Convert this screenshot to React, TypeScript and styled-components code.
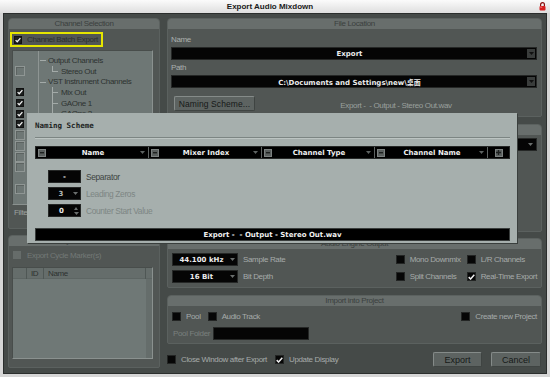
import styled, { createGlobalStyle, css } from "styled-components";

const ui = `"Liberation Sans", Arial, sans-serif`;
const boldFont = `"DejaVu Sans", "Noto Sans CJK SC", sans-serif`;

const GlobalStyle = createGlobalStyle`
  html, body { margin: 0; padding: 0; background: #d6d6d6; }
  body { font-family: ${ui}; font-size: 8px; letter-spacing: -0.35px; white-space: nowrap; }
  * { box-sizing: border-box; }
`;

const Window = styled.div`
  position: relative;
  width: 550px;
  height: 377px;
  display: flex;
  flex-direction: column;
  background: #d6d6d6;
  padding: 0 3px 3px 3px;
  overflow: hidden;
`;

const TitleBar = styled.div`
  height: 13px;
  margin: 0 -3px;
  display: grid;
  grid-template-columns: 1fr auto 1fr;
  align-items: center;
  background: linear-gradient(#fbfbfb, #dedede);
  font: bold 8px "Liberation Sans", Arial, sans-serif;
  letter-spacing: 0;
  color: #1a1a1a;
`;

const TitleText = styled.span`
  padding-right: 10px;
`;

const CloseIcon = styled.svg`
  justify-self: end;
  margin-right: 4px;
`;

const Body = styled.div`
  flex: 1;
  display: grid;
  grid-template-columns: 152px 1fr;
  column-gap: 7px;
  padding: 4px 4px 3px 4px;
  background: #454a48;
  border: 1px solid #2b2e2d;
`;

const Column = styled.div`
  display: flex;
  flex-direction: column;
  min-width: 0;
`;

const Panel = styled.section<{ $h?: number; $mt?: number; $mb?: number }>`
  display: flex;
  flex-direction: column;
  background: #515654;
  border: 1px solid #5b615f;
  border-radius: 4px 4px 2px 2px;
  overflow: hidden;
  margin-top: ${(p) => p.$mt ?? 0}px;
  margin-bottom: ${(p) => p.$mb ?? 0}px;
  ${(p) =>
    p.$h
      ? css`
          height: ${p.$h}px;
          flex: none;
        `
      : css`
          flex: 1;
        `}
`;

const PanelHead = styled.div`
  height: 10px;
  line-height: 10px;
  flex: none;
  text-align: center;
  background: #686e6c;
  color: #3b403e;
`;

/* ---------- checkboxes ---------- */

type BoxKind = "black" | "dark" | "tree" | "disabled";

const Box = styled.span<{ $kind: BoxKind }>`
  flex: none;
  display: inline-flex;
  align-items: center;
  justify-content: center;
  ${(p) =>
    p.$kind === "black" &&
    css`
      width: 9px;
      height: 9px;
      background: #060606;
      border: 1px solid #232524;
    `}
  ${(p) =>
    p.$kind === "dark" &&
    css`
      width: 8px;
      height: 8px;
      background: #1c1f1e;
      border: 1px solid #111;
    `}
  ${(p) =>
    p.$kind === "tree" &&
    css`
      width: 10px;
      height: 10px;
      margin-left: -1px;
      background: #6e7775;
      border: 1px solid #8f9694;
      box-shadow: inset 1px 1px 0 #5c6361;
    `}
  ${(p) =>
    p.$kind === "disabled" &&
    css`
      width: 8px;
      height: 8px;
      background: #666c6a;
    `}
`;

const Tick = () => (
  <svg width="7" height="6" viewBox="0 0 7 6">
    <path d="M0.7 3.1 L2.6 5 L6.3 0.8" fill="none" stroke="#f0f0f0" strokeWidth="1.5" />
  </svg>
);

const Check = ({ kind, on }: { kind: BoxKind; on?: boolean }) => (
  <Box $kind={kind}>{on && <Tick />}</Box>
);

const Caret = ({ color = "#6a6e6d" }: { color?: string }) => (
  <svg width="5" height="3" viewBox="0 0 5 3">
    <path d="M0 0h5L2.5 3z" fill={color} />
  </svg>
);

/* ---------- left column ---------- */

const BatchBox = styled.div`
  margin: 3px 0 0 1px;
  width: 93px;
  height: 15px;
  border: 2px solid #e6e600;
  display: flex;
  align-items: center;
  padding-left: 2px;
  gap: 5px;
  color: #2c302f;
`;

const TreeList = styled.div`
  margin: 3px 0 0 3px;
  width: 141px;
  height: 155px;
  padding-top: 4px;
  border: 1px solid;
  border-color: #484d4b #8a918f #8a918f #484d4b;
  background: linear-gradient(to right, transparent 25px, #8e9593 25px, #8e9593 26px, transparent 26px), #6e7775;
  overflow: hidden;
`;

const TreeRowEl = styled.div`
  height: 10.7px;
  display: grid;
  grid-template-columns: 26px 1fr;
  align-items: center;
`;

const CheckCell = styled.div`
  display: flex;
  padding-left: 3px;
`;

const TreeLabel = styled.div<{ $level: number; $last?: boolean }>`
  position: relative;
  height: 100%;
  display: flex;
  align-items: center;
  color: #2d3230;
  padding-left: ${(p) => (p.$level ? 22 : 9)}px;
  &::before {
    content: "";
    position: absolute;
    ${(p) =>
      p.$level
        ? css`
            left: 13px;
            top: 0;
            height: ${p.$last ? "50%" : "100%"};
            border-left: 1px solid #a3aaa8;
          `
        : css`
            left: 1px;
            top: 50%;
            width: 6px;
            border-top: 1px solid #a3aaa8;
          `}
  }
  &::after {
    content: "";
    position: absolute;
    display: ${(p) => (p.$level ? "block" : "none")};
    left: 13px;
    top: 50%;
    width: 6px;
    border-top: 1px solid #a3aaa8;
  }
`;

const FilterRow = styled.div`
  margin: 3px 0 0 5px;
  height: 10px;
  line-height: 10px;
  color: #9da2a0;
`;

const CycleRow = styled.div`
  margin-top: 4px;
  height: 10px;
  padding-left: 4px;
  display: flex;
  align-items: center;
  gap: 6px;
  color: #737977;
`;

const MarkerList = styled.div`
  margin: 7px 0 8px 3px;
  width: 141px;
  flex: 1;
  display: flex;
  flex-direction: column;
  border: 1px solid;
  border-color: #484d4b #8a918f #8a918f #484d4b;
  background: linear-gradient(to left, #656d6b 6px, transparent 6px), #6f7876;
`;

const MarkerHead = styled.div`
  height: 11px;
  display: grid;
  grid-template-columns: 14px 17px 1fr 6px;
  background: #656d6b;
  color: #2d3230;
  border-bottom: 1px solid #5d6563;
`;

const HeadCell = styled.span`
  line-height: 11px;
  padding-left: 4px;
  border-right: 1px solid #4f5755;
`;

/* ---------- right column ---------- */

const PanelBody = styled.div<{ $pt: number }>`
  display: flex;
  flex-direction: column;
  padding: ${(p) => p.$pt}px 4px 0 3px;
`;

const Label = styled.div<{ $mt?: number }>`
  height: 10px;
  line-height: 10px;
  margin-top: ${(p) => p.$mt ?? 0}px;
  color: #aab0ae;
`;

const Field = styled.div<{ $w?: number; $mt?: number }>`
  height: 13px;
  margin-top: ${(p) => p.$mt ?? 0}px;
  ${(p) =>
    p.$w
      ? css`
          width: ${p.$w}px;
          flex: none;
        `
      : css`
          width: 100%;
        `}
  background: #050505;
  border: 1px solid #252726;
  display: flex;
  align-items: center;
  color: #ececec;
  font: bold 7px ${boldFont};
  letter-spacing: 0;
`;

const FieldText = styled.span<{ $dim?: boolean }>`
  flex: 1;
  text-align: center;
  overflow: hidden;
  color: ${(p) => (p.$dim ? "#b5bab8" : "#ececec")};
`;

const DropBtn = styled.span`
  width: 8px;
  height: 9px;
  margin-right: 1px;
  background: #3a3d3c;
  display: flex;
  align-items: center;
  justify-content: center;
`;

const ButtonRow = styled.div`
  margin-top: 8px;
  height: 15px;
  display: flex;
  align-items: center;
`;

const Button = styled.button<{ $w: number; $small?: boolean }>`
  width: ${(p) => p.$w}px;
  height: 15px;
  flex: none;
  padding: 0;
  background: #5d6361;
  border: 1px solid;
  border-color: #858b89 #3f4442 #3f4442 #858b89;
  border-radius: 2px;
  font-family: ${ui};
  font-size: ${(p) => (p.$small ? 8.5 : 9)}px;
  letter-spacing: ${(p) => (p.$small ? 0.1 : 0)}px;
  color: #161918;
`;

const PreviewText = styled.span`
  flex: 1;
  text-align: center;
  padding-top: 3px;
  color: #9aa09e;
`;

const EngineBody = styled.div`
  display: flex;
  padding: 4px 4px 0 4px;
`;

const FieldGrid = styled.div`
  display: grid;
  grid-template-columns: 66px auto;
  row-gap: 4px;
  column-gap: 5px;
  align-items: center;
`;

const OptGrid = styled.div`
  margin-left: auto;
  display: grid;
  grid-template-columns: 71px auto;
  grid-auto-rows: 13px;
  row-gap: 4px;
  align-items: center;
`;

const Opt = styled.label<{ $dim?: boolean; $push?: boolean }>`
  display: flex;
  align-items: center;
  gap: 5px;
  margin-left: ${(p) => (p.$push ? "auto" : "0")};
  color: ${(p) => (p.$dim ? "#7a807e" : "#a6abaa")};
`;

const ImportBody = styled.div`
  display: flex;
  flex-direction: column;
  padding: 5px 4px 0 4px;
`;

const OptRow = styled.div`
  height: 11px;
  display: flex;
  align-items: center;
  gap: 7px;
`;

const FolderRow = styled.div`
  margin-top: 4px;
  height: 14px;
  display: flex;
  align-items: center;
  gap: 3px;
  padding-left: 1px;
  color: #7a807e;
`;

const BottomRow = styled.div`
  margin-top: 8px;
  height: 15px;
  display: flex;
  align-items: center;
  gap: 8px;
`;

const Buttons = styled.div`
  margin-left: auto;
  margin-right: 1px;
  display: flex;
  gap: 9px;
`;

/* ---------- naming scheme sheet ---------- */

const Sheet = styled.div`
  position: absolute;
  left: 27px;
  top: 113px;
  width: 490px;
  height: 130px;
  padding: 0 7px 0 8px;
  display: flex;
  flex-direction: column;
  background: #a6afad;
  box-shadow: 1px 1px 0 #3a3f3d;
`;

const SheetTitle = styled.div`
  height: 24px;
  padding-top: 1px;
  display: flex;
  align-items: center;
  font: bold 7.5px "DejaVu Sans Mono", "Liberation Mono", monospace;
  letter-spacing: 0;
  color: #1c1f1e;
`;

const Rule = styled.div`
  height: 2px;
  border-top: 1px solid #7c8583;
  border-bottom: 1px solid #bcc4c2;
`;

const SchemeHead = styled.div`
  margin-top: 7px;
  height: 13px;
  display: flex;
  background: #000;
  border: 1px solid #262827;
`;

const Segment = styled.div`
  width: 113px;
  flex: none;
  display: flex;
  align-items: center;
  padding: 0 3px 0 2px;
  border-right: 1px solid #5e6362;
  color: #f0f0f0;
  font: bold 7px ${boldFont};
  letter-spacing: 0;
`;

const SegLabel = styled.span`
  flex: 1;
  text-align: center;
`;

const MiniBtn = styled.span`
  width: 8px;
  height: 8px;
  flex: none;
  display: flex;
  align-items: center;
  justify-content: center;
  background: #5a5f5e;
  border: 1px solid #7c8180;
`;

const PlusCell = styled.div`
  flex: 1;
  display: flex;
  align-items: center;
  justify-content: center;
`;

const Controls = styled.div`
  margin-top: 11px;
  padding-left: 13px;
  display: flex;
  flex-direction: column;
  gap: 4px;
`;

const CtlRow = styled.div`
  height: 13px;
  display: flex;
  align-items: center;
  gap: 5px;
`;

const CtlLabel = styled.span<{ $dim?: boolean }>`
  font-size: 8.4px;
  color: ${(p) => (p.$dim ? "#7d8684" : "#3d4341")};
`;

const Spin = styled.span`
  display: flex;
  flex-direction: column;
  gap: 2px;
  margin-right: 1px;
`;

const PreviewBar = styled.div`
  margin-top: 11px;
  height: 13px;
  display: flex;
  align-items: center;
  justify-content: center;
  background: #000;
  border: 1px solid #3a3e3d;
  color: #f0f0f0;
  font: bold 7px ${boldFont};
  letter-spacing: 0;
`;

type TreeItem = { label: string; level: 0 | 1; check?: "on" | "off"; last?: boolean };

const treeItems: TreeItem[] = [
  { label: "Output Channels", level: 0 },
  { label: "Stereo Out", level: 1, check: "off", last: true },
  { label: "VST Instrument Channels", level: 0 },
  { label: "Mix Out", level: 1, check: "on" },
  { label: "GAOne 1", level: 1, check: "on" },
  { label: "GAOne 2", level: 1, check: "on" },
  { label: "GAOne 3", level: 1, check: "on" },
  { label: "GAOne 4", level: 1, check: "off" },
  { label: "GAOne 5", level: 1, check: "off" },
  { label: "GAOne 6", level: 1, check: "off" },
  { label: "GAOne 7", level: 1, check: "off", last: true },
  { label: "Audio Channels", level: 0 },
  { label: "Audio 01", level: 1, check: "off", last: true },
];

const columns = ["Name", "Mixer Index", "Channel Type", "Channel Name"];

const Minus = () => (
  <svg width="4" height="2" viewBox="0 0 4 2">
    <rect width="4" height="1.4" fill="#1e2120" />
  </svg>
);

const Plus = () => (
  <svg width="5" height="5" viewBox="0 0 5 5">
    <path d="M2.5 0v5M0 2.5h5" stroke="#1e2120" strokeWidth="1.3" />
  </svg>
);

const App = () => {
  return (
    <>
      <GlobalStyle />
      <Window>
        <TitleBar>
          <span />
          <TitleText>Export Audio Mixdown</TitleText>
          <CloseIcon width="7" height="9" viewBox="0 0 7 9">
            <path d="M1.6 4V2.6a1.9 1.9 0 0 1 3.8 0V4" fill="none" stroke="#8a1010" strokeWidth="1.2" />
            <rect x="0.5" y="4" width="6" height="4.5" rx="1" fill="#d62020" />
            <rect x="1.2" y="4.6" width="2" height="1.2" fill="#f27070" />
          </CloseIcon>
        </TitleBar>

        <Body>
          <Column>
            <Panel $h={211}>
              <PanelHead>Channel Selection</PanelHead>
              <BatchBox>
                <Check kind="dark" on />
                <span>Channel Batch Export</span>
              </BatchBox>
              <TreeList>
                {treeItems.map((item) => (
                  <TreeRowEl key={item.label}>
                    <CheckCell>
                      {item.check && <Check kind={item.check === "on" ? "dark" : "tree"} on={item.check === "on"} />}
                    </CheckCell>
                    <TreeLabel $level={item.level} $last={item.last}>
                      {item.label}
                    </TreeLabel>
                  </TreeRowEl>
                ))}
              </TreeList>
              <FilterRow>Filter</FilterRow>
            </Panel>

            <Panel $mt={6} $mb={2}>
              <PanelHead>Cycle Markers</PanelHead>
              <CycleRow>
                <Check kind="disabled" />
                <span>Export Cycle Marker(s)</span>
              </CycleRow>
              <MarkerList>
                <MarkerHead>
                  <HeadCell />
                  <HeadCell>ID</HeadCell>
                  <HeadCell>Name</HeadCell>
                </MarkerHead>
              </MarkerList>
            </Panel>
          </Column>

          <Column>
            <Panel $h={99}>
              <PanelHead>File Location</PanelHead>
              <PanelBody $pt={6}>
                <Label>Name</Label>
                <Field $mt={2}>
                  <FieldText>Export</FieldText>
                  <DropBtn>
                    <Caret color="#111" />
                  </DropBtn>
                </Field>
                <Label $mt={3}>Path</Label>
                <Field $mt={2}>
                  <FieldText>C:\Documents and Settings\new\桌面</FieldText>
                  <DropBtn>
                    <Caret color="#111" />
                  </DropBtn>
                </Field>
                <ButtonRow>
                  <Button $w={81} $small style={{ marginLeft: 3 }}>
                    Naming Scheme...
                  </Button>
                  <PreviewText>Export -&nbsp; - Output - Stereo Out.wav</PreviewText>
                </ButtonRow>
              </PanelBody>
            </Panel>

            <Panel $h={108} $mt={7}>
              <PanelHead>File Format</PanelHead>
              <PanelBody $pt={3}>
                <Field>
                  <FieldText>Wave File</FieldText>
                  <Caret />
                  <span style={{ width: 3 }} />
                </Field>
              </PanelBody>
            </Panel>

            <Panel $h={50} $mt={6}>
              <PanelHead>Audio Engine Output</PanelHead>
              <EngineBody>
                <FieldGrid>
                  <Field>
                    <FieldText>44.100 kHz</FieldText>
                    <Caret />
                    <span style={{ width: 2 }} />
                  </Field>
                  <Opt>Sample Rate</Opt>
                  <Field>
                    <FieldText>16 Bit</FieldText>
                    <Caret />
                    <span style={{ width: 2 }} />
                  </Field>
                  <Opt>Bit Depth</Opt>
                </FieldGrid>
                <OptGrid>
                  <Opt>
                    <Check kind="black" />
                    <span>Mono Downmix</span>
                  </Opt>
                  <Opt>
                    <Check kind="black" />
                    <span>L/R Channels</span>
                  </Opt>
                  <Opt>
                    <Check kind="black" />
                    <span>Split Channels</span>
                  </Opt>
                  <Opt>
                    <Check kind="black" on />
                    <span>Real-Time Export</span>
                  </Opt>
                </OptGrid>
              </EngineBody>
            </Panel>

            <Panel $h={49} $mt={7}>
              <PanelHead>Import into Project</PanelHead>
              <ImportBody>
                <OptRow>
                  <Opt>
                    <Check kind="black" />
                    <span>Pool</span>
                  </Opt>
                  <Opt>
                    <Check kind="black" />
                    <span>Audio Track</span>
                  </Opt>
                  <Opt $push>
                    <Check kind="black" />
                    <span>Create new Project</span>
                  </Opt>
                </OptRow>
                <FolderRow>
                  <span>Pool Folder</span>
                  <Field $w={96} />
                </FolderRow>
              </ImportBody>
            </Panel>

            <BottomRow>
              <Opt>
                <Check kind="black" />
                <span>Close Window after Export</span>
              </Opt>
              <Opt>
                <Check kind="black" on />
                <span>Update Display</span>
              </Opt>
              <Buttons>
                <Button $w={49}>Export</Button>
                <Button $w={50}>Cancel</Button>
              </Buttons>
            </BottomRow>
          </Column>
        </Body>

        <Sheet>
          <SheetTitle>Naming Scheme</SheetTitle>
          <Rule />
          <SchemeHead>
            {columns.map((c) => (
              <Segment key={c}>
                <MiniBtn>
                  <Minus />
                </MiniBtn>
                <SegLabel>{c}</SegLabel>
                <Caret color="#5e6362" />
              </Segment>
            ))}
            <PlusCell>
              <MiniBtn>
                <Plus />
              </MiniBtn>
            </PlusCell>
          </SchemeHead>
          <Controls>
            <CtlRow>
              <Field $w={33}>
                <FieldText>-</FieldText>
              </Field>
              <CtlLabel>Separator</CtlLabel>
            </CtlRow>
            <CtlRow>
              <Field $w={33}>
                <FieldText $dim>3</FieldText>
                <Caret />
                <span style={{ width: 2 }} />
              </Field>
              <CtlLabel $dim>Leading Zeros</CtlLabel>
            </CtlRow>
            <CtlRow>
              <Field $w={33}>
                <FieldText>0</FieldText>
                <Spin>
                  <svg width="4" height="3" viewBox="0 0 4 3">
                    <path d="M0 3h4L2 0z" fill="#6a6e6d" />
                  </svg>
                  <Caret />
                </Spin>
              </Field>
              <CtlLabel $dim>Counter Start Value</CtlLabel>
            </CtlRow>
          </Controls>
          <PreviewBar>Export -&nbsp; - Output - Stereo Out.wav</PreviewBar>
        </Sheet>
      </Window>
    </>
  );
};

export default App;
